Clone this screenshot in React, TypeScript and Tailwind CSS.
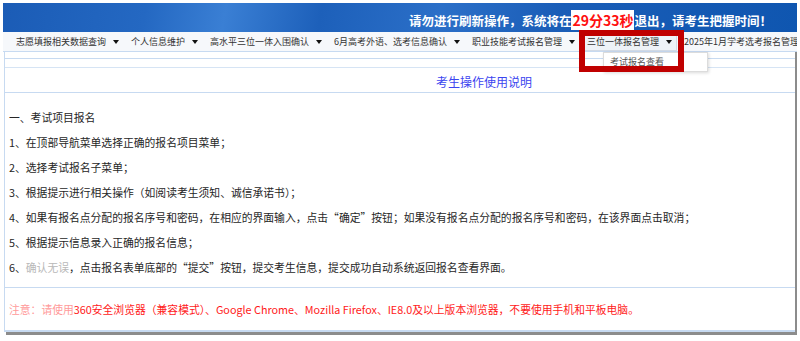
export default function App() {
  const menus = [
    "志愿填报相关数据查询",
    "个人信息维护",
    "高水平三位一体入围确认",
    "6月高考外语、选考信息确认",
    "职业技能考试报名管理",
    "三位一体报名管理",
    "2025年1月学考选考报名管理",
  ];

  const steps = [
    "1、在顶部导航菜单选择正确的报名项目菜单；",
    "2、选择考试报名子菜单；",
    "3、根据提示进行相关操作（如阅读考生须知、诚信承诺书）；",
    "4、如果有报名点分配的报名序号和密码，在相应的界面输入，点击“确定”按钮；如果没有报名点分配的报名序号和密码，在该界面点击取消；",
    "5、根据提示信息录入正确的报名信息；",
  ];

  return (
    <div className="relative w-[800px] h-[341px] overflow-hidden bg-white font-['Noto_Sans_CJK_SC','Noto_Sans',sans-serif]">
      <div className="ml-[3px] mt-[3px] w-[794px]">
        {/* top banner */}
        <div className="h-[29px] flex items-end justify-end pr-[25px] pb-[3px] bg-[linear-gradient(100deg,#1b5cb6_0%,#2468c2_18%,#3a7fd4_28%,#1d60ba_40%,#2b6fc8_55%,#1a5db7_70%,#0f56b0_100%)]">
          <p className="text-[12.5px] leading-[16px] font-bold text-white">
            请勿进行刷新操作，系统将在
            <span className="bg-white text-[#ff1010] text-[14px] px-[1px]">29分33秒</span>
            退出，请考生把握时间！
          </p>
        </div>

        {/* menu bar */}
        <div className="h-[20px] flex items-center gap-[2px] pl-[8px] bg-[#f6f8fb] border-b border-[#c7daf1] whitespace-nowrap overflow-hidden">
          {menus.map((m, i) => (
            <div
              key={m}
              className={`flex items-center h-[18px] px-[4px] border text-[9px] text-[#333] ${
                i === 5 ? "bg-[#eef2f7] border-[#d3dbe6]" : "border-transparent"
              }`}
            >
              <span>{m}</span>
              {i < 6 && (
                <svg width="6" height="4" viewBox="0 0 6 4" className="ml-[7px]">
                  <path d="M0 0H6L3 4Z" fill="#111" />
                </svg>
              )}
            </div>
          ))}
        </div>

        {/* panel */}
        <div className="ml-[1px] border-l border-[#c7daf1] border-r-2 border-r-[#8c8c8c]">
          <div className="h-[7px] border-b border-[#c7daf1]" />
          <div className="h-[9px] border-b border-[#d6e4f4]" />
          <div className="h-[25px] border-b border-[#c7daf1] pl-[431px] pt-[6px] text-[12px] leading-[16px] text-[#3b45f0]">
            考生操作使用说明
          </div>
          <div className="h-[195px] pt-[12px] pl-[4px] text-[10.8px] leading-[25px] text-[#262626] border-b border-[#c7daf1]">
            <p>一、考试项目报名</p>
            {steps.map((s) => (
              <p key={s}>{s}</p>
            ))}
            <p>
              6、<span className="text-[#b8b8b8]">确认无误</span>，点击报名表单底部的“提交”按钮，提交考生信息，提交成功自动系统返回报名查看界面。
            </p>
          </div>
          <div className="h-[44px] flex items-center pl-[4px] text-[10.8px] text-[#ff1a1a] border-b-2 border-b-[#c7daf1]">
            <p>
              <span className="text-[#ff9a9a]">注意：请使用</span>360安全浏览器（兼容模式）、Google Chrome、Mozilla Firefox、IE8.0及以上版本浏览器，不要使用手机和平板电脑。
            </p>
          </div>
        </div>
        <div className="h-[3px] ml-[3px] bg-[#8c8c8c]" />
      </div>

      {/* opened dropdown */}
      <div className="absolute left-[603px] top-[52px] w-[105px] h-[20px] bg-white border border-[#dcdcdc] shadow-[1px_1px_3px_rgba(0,0,0,0.15)] pl-[6px] text-[9px] leading-[18px] text-[#555]">
        考试报名查看
      </div>

      {/* highlight frame */}
      <div className="absolute left-[579px] top-[30px] w-[105px] h-[42px] border-[6px] border-[#c00000]" />
    </div>
  );
}
